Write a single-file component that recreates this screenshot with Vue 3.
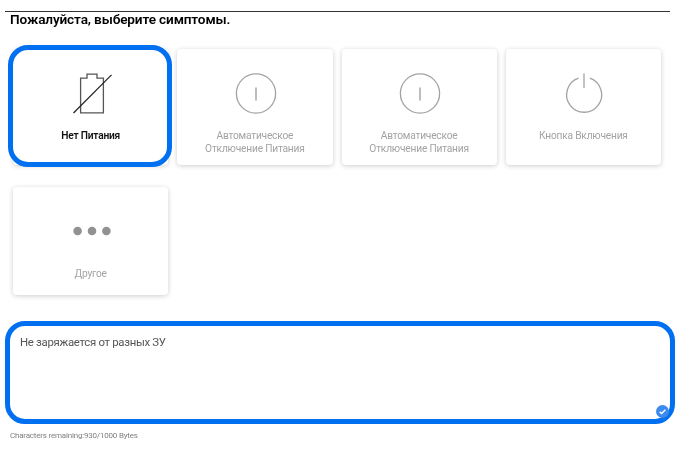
<script setup>
const cards = [
  { id: 1, lines: ['Нет Питания'], icon: 'battery', selected: true },
  { id: 2, lines: ['Автоматическое', 'Отключение Питания'], icon: 'circle' },
  { id: 3, lines: ['Автоматическое', 'Отключение Питания'], icon: 'circle' },
  { id: 4, lines: ['Кнопка Включения'], icon: 'power' },
  { id: 5, lines: ['Другое'], icon: 'dots' },
]
</script>

<template>
  <main class="page">
    <h1 class="title">Пожалуйста, выберите симптомы.</h1>
    <div class="grid">
      <button v-for="c in cards" :key="c.id" class="card" :class="{ selected: c.selected, short: c.icon === 'dots' }" type="button">
        <svg class="icon" viewBox="0 0 48 44" width="48" height="44" fill="none">
          <g v-if="c.icon === 'battery'" stroke="#555" stroke-width="1.3">
            <path d="M12.6 44V9.3h6.4V5.3h10V9.3h6.4V44z" transform="translate(0 -4.2)" />
            <path d="M5.5 44.2 43.5 6" stroke="#222" stroke-width="1.2" transform="translate(0 -4.2)" />
          </g>
          <g v-else-if="c.icon === 'circle'" stroke="#a3a3a3" stroke-width="1.3">
            <circle cx="24" cy="20.5" r="19.6" />
            <path d="M24 14.5v13" stroke="#999" />
          </g>
          <g v-else-if="c.icon === 'power'" stroke="#a3a3a3" stroke-width="1.3">
            <path d="M18.5 5.2A17.5 17.5 0 1 0 29.8 5.2" />
            <path d="M24 0.5v14.5" />
          </g>
          <g v-else fill="#919191">
            <circle cx="9.6" cy="15" r="4.3" />
            <circle cx="24" cy="15" r="4.3" />
            <circle cx="38.4" cy="15" r="4.3" />
          </g>
        </svg>
        <span class="label">
          <span v-for="l in c.lines" :key="l" class="line">{{ l }}</span>
        </span>
      </button>
    </div>
    <div class="field">
      <p class="value">Не заряжается от разных ЗУ</p>
      <span class="check">
        <svg viewBox="0 0 13 13" width="13" height="13" fill="none"><path d="M3.6 6.7 5.6 8.5 9.4 4.7" stroke="#fff" stroke-width="1.4" /></svg>
      </span>
    </div>
    <p class="count">Characters remaining:930/1000 Bytes</p>
  </main>
</template>

<style scoped>
.page {
  width: 676px;
  height: 453px;
  box-sizing: border-box;
  padding: 11px 6px 0 5px;
  font-family: Roboto, "Noto Sans", sans-serif;
  overflow: hidden;
  background: #fff;
  filter: blur(0.3px);
}
.title {
  margin: 0;
  border-top: 1px solid #333;
  padding-left: 5px;
  font-size: 13.6px;
  letter-spacing: -0.14px;
  line-height: 15px;
  font-weight: 600;
  color: #000;
}
.grid {
  display: grid;
  grid-template-columns: repeat(4, 1fr);
  grid-template-rows: 116px 108px;
  gap: 22px 9px;
  margin: 22px 9px 0 8px;
}
.card {
  position: relative;
  display: flex;
  flex-direction: column;
  align-items: center;
  padding: 24px 0 0;
  border: 0;
  border-radius: 4px;
  background: #fff;
  box-shadow: 0 1px 5px rgba(0, 0, 0, 0.2);
  font-family: inherit;
}
.card.short {
  padding-top: 29px;
}
.card.selected::after {
  content: "";
  position: absolute;
  inset: -4px -4px -2px -5px;
  border: 5px solid #006ff0;
  border-radius: 20px;
}
.icon {
  display: block;
  margin-left: 2px;
}
.label {
  display: flex;
  flex-direction: column;
  margin-top: 12px;
  font-size: 10.2px;
  letter-spacing: -0.2px;
  line-height: 13px;
  color: #a3a3a3;
}
.short .label {
  margin-top: 7px;
}
.selected .label {
  margin-top: 12px;
  color: #111;
  font-weight: 600;
}
.field {
  position: relative;
  height: 103px;
  box-sizing: border-box;
  margin: 26px -5px 0 0;
  border: 5px solid #006ff0;
  border-radius: 20px;
  padding: 9px 10px;
}
.value {
  margin: 0;
  font-size: 11.4px;
  letter-spacing: -0.3px;
  line-height: 14px;
  color: #555;
}
.check {
  position: absolute;
  right: 1px;
  bottom: 1px;
  width: 13px;
  height: 13px;
  border-radius: 50%;
  background: #3b8bec;
}
.check svg {
  display: block;
}
.count {
  margin: 6px 0 0 5px;
  font-size: 8px;
  letter-spacing: -0.2px;
  line-height: 12px;
  color: #808080;
}
</style>
